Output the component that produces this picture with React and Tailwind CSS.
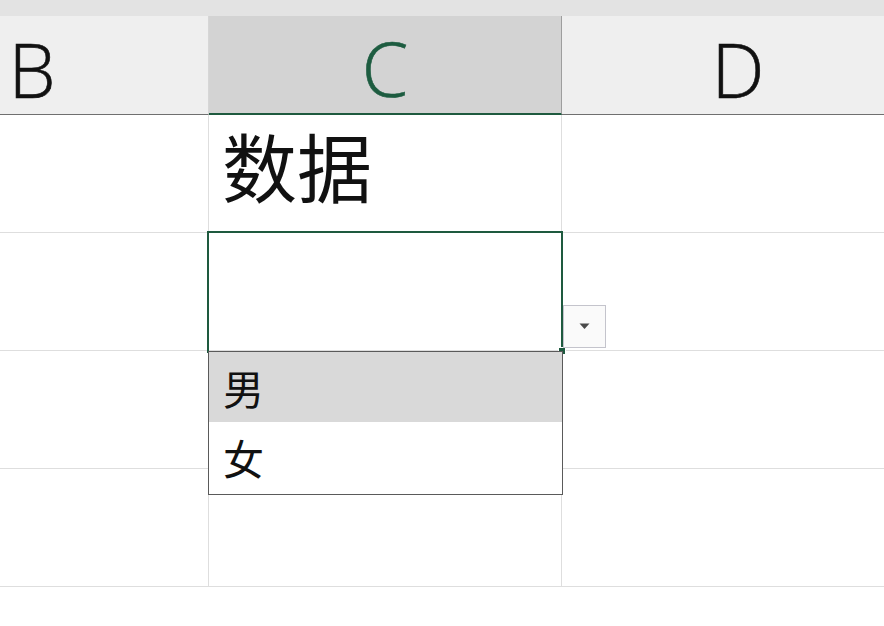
import React from "react";

const latin = "font-['Open_Sans','Liberation_Sans',sans-serif]";
const cjk = "font-['Noto_Sans_CJK_SC','Noto_Sans',sans-serif]";

function HeaderCell({ label, active }) {
  return (
    <div
      className={
        "w-[353px] shrink-0 h-[99px] flex items-center justify-center " +
        (active
          ? "bg-[#d3d3d3] border-b-2 border-b-[#1e5a3f] border-r border-r-[#9e9e9e] text-[#1d5c40]"
          : "bg-[#efefef] border-b border-b-[#6f6f6f] border-r border-r-[#d6d6d6] text-[#111]")
      }
    >
      <span className={latin + " text-[75px] font-light leading-none pt-[8px] [-webkit-text-stroke:0.6px_currentColor]"}>{label}</span>
    </div>
  );
}

function Row({ children, cText }) {
  return (
    <div className="flex h-[118px]">
      <div className="w-[353px] shrink-0 border-r border-b border-[#dedede]" />
      <div className="w-[353px] shrink-0 border-r border-b border-[#dedede] relative flex items-center pl-[13px]">
        {cText ? (
          <span className={cjk + " text-[75px] font-normal leading-none text-[#111] pb-[18px]"}>{cText}</span>
        ) : null}
        {children}
      </div>
      <div className="w-[353px] shrink-0 border-b border-[#dedede]" />
    </div>
  );
}

export default function App() {
  return (
    <div className="w-[884px] h-[626px] overflow-hidden bg-white relative">
      <div className="h-[16px] bg-[#e3e3e3]" />
      <div className="ml-[-144px]">
        <div className="flex">
          <HeaderCell label="B" />
          <HeaderCell label="C" active />
          <HeaderCell label="D" />
        </div>
        <Row cText="数据" />
        <Row>
          <div className="absolute -left-[2px] -top-[2px] -right-[2px] -bottom-[3px] border-2 border-[#1e5a3f]" />
          <div className="absolute -right-[5px] -bottom-[5px] w-[8px] h-[8px] bg-[#1e5a3f] border border-white" />
        </Row>
        <Row />
        <Row />
      </div>

      {/* dropdown arrow button */}
      <div className="absolute left-[563px] top-[305px] w-[43px] h-[43px] bg-[#fafafa] border border-[#c4c4cc] flex items-center justify-center">
        <svg width="11" height="7" viewBox="0 0 11 7">
          <path d="M0.5 0.5 L10.5 0.5 L5.5 6 Z" fill="#4a4a4a" />
        </svg>
      </div>

      {/* dropdown list */}
      <div className="absolute left-[208px] top-[351px] w-[355px] h-[144px] bg-white border border-[#5a5a5a] flex flex-col">
        <div className="h-[70px] bg-[#d9d9d9] flex items-center pl-[14px]">
          <span className={cjk + " text-[41px] leading-none text-[#111]"}>男</span>
        </div>
        <div className="h-[71px] flex items-center pl-[14px]">
          <span className={cjk + " text-[41px] leading-none text-[#111]"}>女</span>
        </div>
      </div>
    </div>
  );
}
